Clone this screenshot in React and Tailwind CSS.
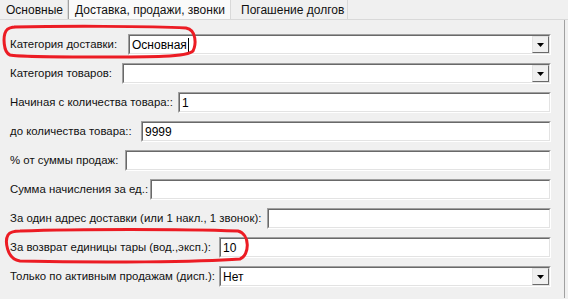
import { useState } from "react";

const rows = [
  { label: "Категория доставки:", lw: "w-[118px]", value: "Основная", select: true, cursor: true },
  { label: "Категория товаров:", lw: "w-[112px]", value: "", select: true },
  { label: "Начиная с количества товара::", lw: "w-[168px]", value: "1" },
  { label: "до количества товара::", lw: "w-[131px]", value: "9999" },
  { label: "% от суммы продаж:", lw: "w-[115px]", value: "" },
  { label: "Сумма начисления за ед.:", lw: "w-[140px]", value: "" },
  { label: "За один адрес доставки (или 1 накл., 1 звонок):", lw: "w-[257px]", value: "" },
  { label: "За возврат единицы тары (вод.,эксп.):", lw: "w-[209px]", value: "10" },
  { label: "Только по активным продажам (дисп.):", lw: "w-[209px]", value: "Нет", select: true },
];

function DropButton() {
  return (
    <div className="h-full w-[17px] border-t border-l border-[#e3e3e3] border-r border-b border-r-[#696969] border-b-[#696969] bg-[#f0f0f0] flex items-center justify-center">
      <svg width="7" height="4" viewBox="0 0 7 4">
        <path d="M0 0 H7 L3.5 4 Z" fill="#000" />
      </svg>
    </div>
  );
}

function Field({ value, select, cursor }) {
  return (
    <div className="flex-1 h-[21px] border-t border-l border-[#a0a0a0] border-r border-b border-r-white border-b-white">
      <div className="h-full flex border-t border-l border-[#696969] border-r border-b border-r-[#e3e3e3] border-b-[#e3e3e3] bg-white">
        <div className="flex-1 flex items-center pl-[2px] text-[12px] text-black leading-none">
          {value}
          {cursor && <span className="ml-[1px] inline-block w-[1px] h-[14px] bg-black" />}
        </div>
        {select && <DropButton />}
      </div>
    </div>
  );
}

export default function App() {
  const [tab] = useState(1);
  const tabs = ["Основные", "Доставка, продажи, звонки", "Погашение долгов"];
  const widths = ["w-[68px]", "w-[163px]", "w-[117px]"];

  return (
    <div
      className="relative w-[568px] h-[299px] overflow-hidden bg-[#f0f0f0] text-[#111]"
      style={{ fontFamily: '"Liberation Sans", Arial, sans-serif' }}
    >
      {/* Tabs */}
      <div className="flex h-[20px] border-b border-[#d9d9d9]">
        {tabs.map((t, i) => (
          <div
            key={t}
            className={`${widths[i]} h-full flex items-center px-[6px] text-[12px] whitespace-nowrap border-r border-[#d9d9d9] ${
              i === tab ? "bg-[#fafafa] border-l border-l-[#a0a0a0]" : "bg-[#f0f0f0]"
            } ${i === 2 ? "pl-[10px]" : ""}`}
          >
            {t}
          </div>
        ))}
      </div>

      {/* Panel */}
      <div className="flex h-[278px]">
        <div className="w-[564px] flex flex-col pt-[10px] pl-[10px] pr-[13px]">
          {rows.map((r) => (
            <div key={r.label} className="h-[29px] flex items-center">
              <div className={`${r.lw} shrink-0 text-[11.4px] whitespace-nowrap`}>{r.label}</div>
              <Field value={r.value} select={r.select} cursor={r.cursor} />
            </div>
          ))}
        </div>
        <div className="w-[1px] h-full bg-[#a0a0a0]" />
        <div className="flex-1 h-full bg-[#f0f0f0]" />
      </div>

      {/* Red marks */}
      <svg className="absolute inset-0 pointer-events-none" width="568" height="299" viewBox="0 0 568 299">
        <path
          d="M14 27 C60 26 150 26 186 28 C197 30 196 45 193 51 C188 57 150 57 100 57 C50 57 20 57 10 55 C3 52 3 36 6 31 C8 28 11 27 16 27"
          fill="none"
          stroke="#ec1c24"
          strokeWidth="3"
        />
        <path
          d="M20 231 C80 229 180 229 238 231 C250 234 250 255 240 259 C200 262 100 263 20 261 C6 259 5 240 8 235 C10 232 14 231 20 231"
          fill="none"
          stroke="#ec1c24"
          strokeWidth="3"
        />
      </svg>
    </div>
  );
}
